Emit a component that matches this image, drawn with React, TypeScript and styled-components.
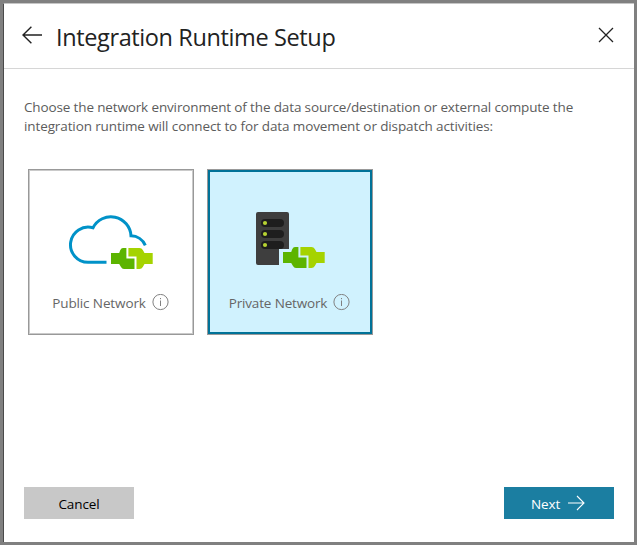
import React from "react";
import styled, { createGlobalStyle } from "styled-components";

const GlobalStyle = createGlobalStyle`
  *, *::before, *::after { box-sizing: border-box; }
  body { margin: 0; background: #808080; }
  button { font: inherit; }
`;

const Frame = styled.div`
  width: 637px;
  height: 545px;
  padding: 3px;
  background: #808080;
  font-family: "Open Sans", "Noto Sans", sans-serif;
`;

const Dialog = styled.main`
  display: flex;
  flex-direction: column;
  width: 631px;
  height: 539px;
  background: #fff;
  border-top: 1px solid #c6c6c6;
  border-left: 1px solid #4a4a4a;
`;

const Header = styled.header`
  display: flex;
  align-items: center;
  height: 65px;
  padding: 0 20px 2px 18px;
  border-bottom: 1px solid #d6d6d6;
`;

const IconButton = styled.button`
  display: flex;
  padding: 0;
  border: 0;
  background: none;
`;

const Title = styled.h1`
  flex: 1;
  margin: 0 0 0 13px;
  padding-top: 3px;
  font-size: 23.5px;
  font-weight: 400;
  line-height: 32px;
  letter-spacing: -0.38px;
  color: #222;
  white-space: nowrap;
`;

const Content = styled.section`
  flex: 1;
  padding: 29px 20px 0;
`;

const Description = styled.p`
  margin: 0;
  font-size: 13.5px;
  line-height: 19px;
  color: #5c5c5c;
  white-space: nowrap;
`;

const Line = styled.span<{ $spacing: number }>`
  display: block;
  letter-spacing: ${(p) => p.$spacing}px;
`;

const Cards = styled.div`
  display: flex;
  gap: 13px;
  margin: 33px 0 0 4px;
`;

const Card = styled.button<{ $selected?: boolean }>`
  display: flex;
  flex-direction: column;
  align-items: center;
  width: 166px;
  height: 166px;
  padding: 38px 0 0;
  border: 1px solid #999;
  background: ${(p) => (p.$selected ? "#d0f2fe" : "#fff")};
  box-shadow: inset 0 0 0 ${(p) => (p.$selected ? "2px #007298" : "1px #cacaca")};
`;

const Caption = styled.span<{ $spacing: number }>`
  display: flex;
  align-items: center;
  gap: 6px;
  height: 20px;
  margin: 20px 1px 0 0;
  font-size: 13.5px;
  line-height: 20px;
  letter-spacing: ${(p) => p.$spacing}px;
  color: #666;
  white-space: nowrap;
`;

const CaptionText = styled.span`
  padding-top: 2px;
`;

const Footer = styled.footer`
  display: flex;
  justify-content: space-between;
  padding: 0 20px 23px;
`;

const Action = styled.button<{ $primary?: boolean }>`
  display: flex;
  align-items: center;
  justify-content: center;
  gap: 8px;
  width: 110px;
  height: 32px;
  padding: 0 ${(p) => (p.$primary ? 2 : 0)}px 0 0;
  border: 0;
  font-size: 13.5px;
  letter-spacing: -0.1px;
  color: ${(p) => (p.$primary ? "#fff" : "#000")};
  background: ${(p) => (p.$primary ? "#1b7ea1" : "#c8c8c8")};
`;

const ActionText = styled.span`
  padding-top: 2px;
  line-height: 18px;
`;

const BackIcon = () => (
  <svg width="21" height="18" viewBox="0 0 21 18" fill="none" stroke="#222" strokeWidth="1.4">
    <path d="M20 9H1M9.4 .7 1 9l8.4 8.3" />
  </svg>
);

const CloseIcon = () => (
  <svg width="16" height="16" viewBox="0 0 16 16" fill="none" stroke="#222" strokeWidth="1.3">
    <path d="m1 1 14 14M15 1 1 15" />
  </svg>
);

const NextIcon = () => (
  <svg width="17" height="16" viewBox="0 0 17 16" fill="none" stroke="#fff" strokeWidth="1.1">
    <path d="M0 8h16M9 1l7 7-7 7" />
  </svg>
);

const InfoIcon = () => (
  <svg width="17" height="17" viewBox="0 0 17 17" fill="none" stroke="#808080" strokeWidth="1">
    <circle cx="8.5" cy="8" r="7.6" />
    <path d="M8.5 6.5v5.5M8.5 4v1.2" />
  </svg>
);

const Plug = ({ x, y }: { x: number; y: number }) => (
  <g transform={`translate(${x} ${y})`}>
    <path fill="#5cb400" d="M0 5h8.2l1-2.8Q10.2 0 12 0h3.4v10.6h8.1V21H13q-2 0-3-2l-1.8-3H0z" />
    <path fill="#a5d300" d="M17.4 0h11.1q2.2 0 3.3 2L33.5 5h8.2v11h-8.2l-1.7 3q-1.1 2-3.3 2h-3V8.6h-8.1z" />
  </g>
);

const CloudArt = () => (
  <svg width="100" height="64" viewBox="61 208 100 64">
    <path
      fill="none"
      stroke="#0092c8"
      strokeWidth="3"
      d="M106.5 262.3H88A17.6 17.6 0 1 1 93 227.8A20.1 20.1 0 0 1 131 235.8A16 16 0 0 1 145.3 245.3"
    />
    <Plug x={111} y={248} />
  </svg>
);

const ServerArt = () => (
  <svg width="100" height="64" viewBox="240 208 100 64">
    <path fill="#3e3e3e" d="M258 212h29a2 2 0 0 1 2 2v35h-10v16h-21a2 2 0 0 1-2-2v-49a2 2 0 0 1 2-2z" />
    {[223, 234, 245].map((cy) => (
      <g key={cy}>
        <rect x="261" y={cy - 4} width="23" height="8" rx="4" fill="#1e1e1e" />
        <circle cx="265" cy={cy} r="2.1" fill="#b7d332" />
      </g>
    ))}
    <Plug x={283} y={247} />
  </svg>
);

export default function App() {
  return (
    <>
      <GlobalStyle />
      <Frame>
        <Dialog>
          <Header>
            <IconButton aria-label="Back"><BackIcon /></IconButton>
            <Title>Integration Runtime Setup</Title>
            <IconButton aria-label="Close"><CloseIcon /></IconButton>
          </Header>
          <Content>
            <Description>
              <Line $spacing={-0.14}>Choose the network environment of the data source/destination or external compute the</Line>
              <Line $spacing={-0.113}>integration runtime will connect to for data movement or dispatch activities:</Line>
            </Description>
            <Cards>
              <Card>
                <CloudArt />
                <Caption $spacing={-0.12}>
                  <CaptionText>Public Network</CaptionText>
                  <InfoIcon />
                </Caption>
              </Card>
              <Card $selected>
                <ServerArt />
                <Caption $spacing={-0.16}>
                  <CaptionText>Private Network</CaptionText>
                  <InfoIcon />
                </Caption>
              </Card>
            </Cards>
          </Content>
          <Footer>
            <Action><ActionText>Cancel</ActionText></Action>
            <Action $primary><ActionText>Next</ActionText><NextIcon /></Action>
          </Footer>
        </Dialog>
      </Frame>
    </>
  );
}
